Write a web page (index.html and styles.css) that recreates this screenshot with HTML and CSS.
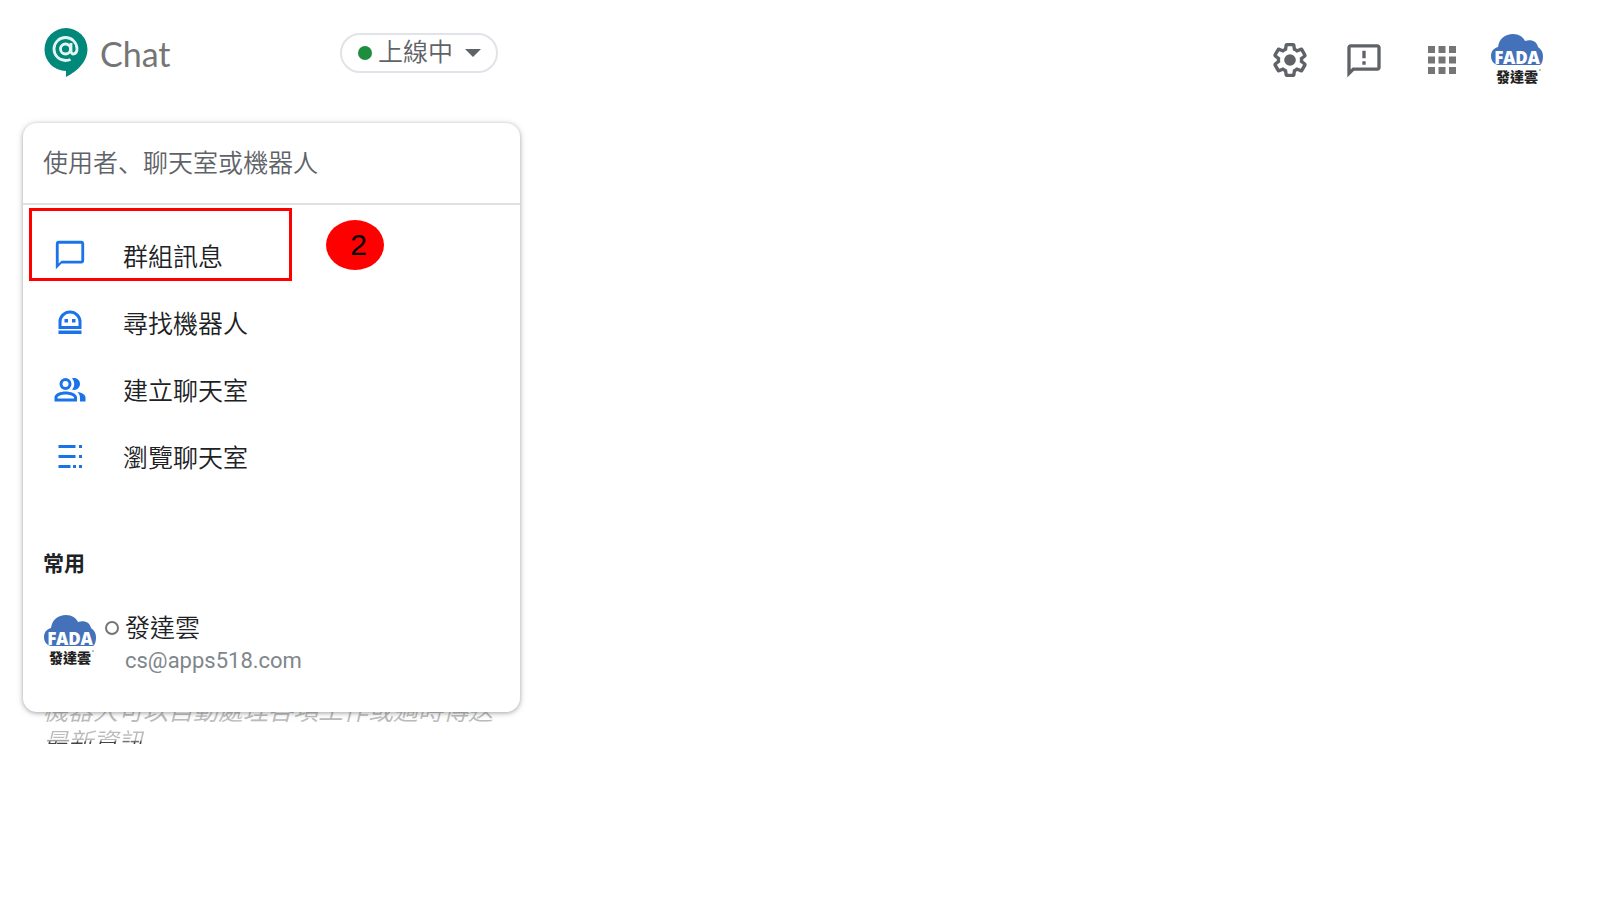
FILE: index.html
```html
<!DOCTYPE html>
<html lang="zh-Hant">
<head>
<meta charset="utf-8">
<title>Chat</title>
<link rel="stylesheet" href="styles.css">
</head>
<body>
<svg class="defs" aria-hidden="true">
  <symbol id="fada" viewBox="0 0 54 54">
    <path fill="#4472ba" d="M8 32C3 31 1 27 1 23c0-5 3-8 7-9C9 6 15 1 23 1c6 0 10 3 12 7 7-2 12 1 13 6 3 2 5 5 5 9 0 4-1 8-3 9z"/>
    <text class="logo-latin" x="27" y="31" text-anchor="middle">FADA</text>
    <text class="logo-han" x="27" y="49" text-anchor="middle">發達雲</text>
    <circle cx="50" cy="37" r="1" fill="#aaa"/>
  </symbol>
</svg>
<header class="topbar">
  <a class="brand" href="#">
    <svg class="brand-mark" viewBox="0 0 44 50" aria-hidden="true">
      <path fill="#00897b" d="M22 0a21.500 21.500 0 0 0 0 43v6c12-6 21.500-16 21.500-27.500A21.500 21.500 0 0 0 22 0z"/>
      <circle cx="21.500" cy="21" r="5" fill="none" stroke="#e5f5f2" stroke-width="2.800"/>
      <path fill="none" stroke="#e5f5f2" stroke-width="2.800" d="M27 15v8c0 4.500 6 4 6-2A11.500 11.500 0 1 0 21.500 32.500c2 0 3.500-.3 5-1"/>
    </svg>
    <span class="brand-name">Chat</span>
  </a>
  <button class="status" type="button"><span class="online"></span><span>上線中</span><span class="caret"></span></button>
  <nav class="tools">
    <button class="tool" type="button" aria-label="設定">
      <svg width="40" height="40" viewBox="0 0 24 24" fill="#5f6368"><path d="M13.850 22.250h-3.700c-.74 0-1.360-.54-1.450-1.270l-.27-1.890c-.27-.14-.53-.29-.79-.46l-1.800.72c-.7.260-1.470-.03-1.810-.65L2.200 15.530c-.35-.66-.2-1.440.36-1.880l1.530-1.190c-.01-.15-.02-.3-.02-.46 0-.15.010-.31.020-.46l-1.520-1.190c-.59-.45-.74-1.260-.37-1.880l1.850-3.190c.34-.62 1.110-.9 1.790-.63l1.810.73c.26-.17.520-.32.780-.46l.27-1.910c.09-.7.710-1.250 1.440-1.250h3.700c.74 0 1.360.54 1.450 1.270l.27 1.890c.27.140.53.290.79.460l1.800-.72c.71-.26 1.480.03 1.820.65l1.840 3.180c.36.660.2 1.440-.36 1.880l-1.520 1.190c.01.150.020.300.020.460s-.01.310-.02.460l1.520 1.190c.56.450.72 1.230.37 1.860l-1.860 3.220c-.34.620-1.110.9-1.800.63l-1.800-.72c-.26.170-.52.320-.78.460l-.27 1.910c-.1.680-.72 1.220-1.460 1.220zm-3.230-2h2.760l.37-2.550.53-.22c.44-.18.880-.44 1.340-.78l.45-.34 2.380.96 1.380-2.400-2.030-1.580.07-.56c.03-.26.060-.51.060-.78s-.03-.53-.06-.78l-.07-.56 2.030-1.580-1.390-2.400-2.390.96-.45-.35c-.42-.32-.87-.58-1.330-.77l-.52-.22-.37-2.550h-2.760l-.37 2.550-.53.210c-.44.190-.88.440-1.340.79l-.45.330-2.380-.95-1.390 2.390 2.030 1.580-.07.560a7 7 0 0 0-.06.790c0 .26.020.53.060.78l.07.560-2.030 1.580 1.380 2.400 2.390-.96.450.35c.43.330.86.580 1.330.77l.53.220z"/><circle cx="12" cy="12" r="3.500"/></svg>
    </button>
    <button class="tool" type="button" aria-label="意見回饋">
      <svg width="40" height="40" viewBox="0 0 24 24" fill="#5f6368"><path d="M20 2.500H4c-1.100 0-1.990.9-1.990 2L2 22.500l4-4h14c1.100 0 2-.9 2-2v-12c0-1.100-.9-2-2-2zm0 14H5.170L4 17.670V4.500h16v12zM11 6.500h2V11h-2zM11 12.800h2v2h-2z"/></svg>
    </button>
    <button class="tool" type="button" aria-label="應用程式">
      <svg width="42" height="42" viewBox="0 0 42 42" fill="#757575"><path d="M7 7h7v7H7zM17.500 7h7v7h-7zM28 7h7v7h-7zM7 17.500h7v7H7zM17.500 17.500h7v7h-7zM28 17.500h7v7h-7zM7 28h7v7H7zM17.500 28h7v7h-7zM28 28h7v7h-7z"/></svg>
    </button>
    <button class="tool account" type="button" aria-label="發達雲"><svg class="avatar"><use href="#fada"/></svg></button>
  </nav>
</header>
<main class="side">
  <section class="card">
    <input class="search" type="text" lang="ja" aria-label="搜尋" placeholder="使用者、聊天室或機器人">
    <ul class="menu">
      <li><button class="item" type="button">
        <svg class="icon" viewBox="0 0 24 24"><path d="M20 2H4c-1.100 0-2 .9-2 2v18l4-4h14c1.100 0 2-.9 2-2V4c0-1.100-.9-2-2-2zm0 14H6l-2 2V4h16v12z"/></svg>群組訊息</button>
        <span class="mark"></span><span class="step">2</span></li>
      <li><button class="item" type="button">
        <svg class="icon" viewBox="0 0 34 34"><path fill-rule="evenodd" d="M5.500 24V17a11.500 11.500 0 0 1 23 0v7zM8.500 21h17v-4a8.500 8.500 0 0 0-17 0zM5.500 25.500h23V29h-23zM11.500 14h3.500v3.500h-3.500zM19 14h3.500v3.500H19z"/></svg>尋找機器人</button></li>
      <li><button class="item" type="button">
        <svg class="icon" viewBox="0 0 34 34"><path transform="translate(0 1)" fill-rule="evenodd" d="M12.500 5a6 6 0 1 1 0 12 6 6 0 0 1 0-12zm0 3a3 3 0 1 0 0 6 3 3 0 0 0 0-6zM1.500 28.500v-4c0-4 6-6 11-6s11.500 2 11.500 6v4zM4.500 25.500H21v-1c0-1.500-4.500-3-8.500-3s-8 1.500-8 3zM19 16.500c3-3 3-8 0-11 4-1.500 8 1.500 8 5.500s-4 7-8 5.500zM24.500 19c4.500.8 8 2.500 8 5.500v4H27v-4c0-2.200-1-4-2.500-5.500z"/></svg>建立聊天室</button></li>
      <li><button class="item" type="button">
        <svg class="icon" viewBox="0 0 34 34"><path d="M5.500 6h17v3h-17zM5.500 16h17v3h-17zM5.500 26h12v3h-12zM26 6h3v3h-3zM26 16h3v3h-3zM26 26h3v3h-3zM20 26h3v3h-3z"/></svg>瀏覽聊天室</button></li>
    </ul>
    <h2 class="heading">常用</h2>
    <a class="contact" href="#">
      <svg class="avatar"><use href="#fada"/></svg>
      <span class="offline"></span>
      <span class="who"><span class="name">發達雲</span><span class="mail">cs@apps518.com</span></span>
    </a>
  </section>
  <p class="tip">機器人可以自動處理各項工作或適時傳送<span class="tip-end">最新資訊</span></p>
</main>
</body>
</html>
```
FILE: styles.css
```css
* { box-sizing: border-box; }
body {
  margin: 0;
  background: #fff;
  color: #202124;
  font-family: Roboto, "Noto Sans CJK TC", sans-serif;
  font-size: 25px;
  font-weight: 350;
}
button, input { font: inherit; color: inherit; background: none; border: 0; padding: 0; }
a { color: inherit; text-decoration: none; }
.defs { position: absolute; width: 0; height: 0; }
.logo-latin { font: 900 17px "Noto Sans", sans-serif; fill: #fff; }
.logo-han { font: 900 14px "Noto Sans CJK TC", sans-serif; fill: #222; }

.topbar { display: flex; align-items: flex-start; padding: 28px 56px 0 44px; height: 123px; }
.brand { display: flex; gap: 12px; width: 296px; }
.brand-mark { width: 44px; height: 50px; }
.brand-name { font: 400 34px/52px Lato, sans-serif; color: #757575; }
.status {
  display: flex; align-items: center; gap: 6px;
  width: 158px; height: 40px; margin-top: 5px; padding: 0 14px 0 16px;
  border: 2px solid #e1e3e8; border-radius: 20px;
  color: #5f6368; line-height: 36px; white-space: nowrap;
}
.online { width: 14px; height: 14px; border-radius: 50%; background: #1e8e3e; }
.caret { margin-left: 6px; border: 8px solid transparent; border-top-color: #5f6368; border-bottom: 0; }
.tools { display: flex; align-items: center; margin-left: auto; margin-top: 5px; }
.tool { display: flex; margin-right: 34px; }
.tool:nth-child(2) { margin-right: 37px; }
.tool:nth-child(3) { margin-right: 27px; }
.tool.account { margin: 0; }
.avatar { width: 54px; height: 54px; flex: none; }

.side { width: 497px; margin-left: 23px; }
.card {
  position: relative; z-index: 1;
  padding-bottom: 35px;
  border-radius: 14px; background: #fff;
  box-shadow: 0 1px 4px rgba(60, 64, 67, .4), 0 1px 8px rgba(60, 64, 67, .12);
}
.search {
  display: block; width: 100%; height: 82px; padding: 0 20px;
  border-bottom: 2px solid #dfe1e5;
  font-family: Roboto, "Noto Sans CJK JP", sans-serif;
}
.search::placeholder { color: #5f6368; opacity: 1; }
.menu { list-style: none; margin: 0; padding: 16px 0 0; }
.menu li { position: relative; }
.item { display: flex; align-items: center; gap: 36px; width: 100%; height: 67px; padding-left: 30px; text-align: left; }
.icon { width: 34px; height: 34px; fill: #1a73e8; }
.mark { position: absolute; left: 6px; top: -13px; width: 263px; height: 73px; border: 3px solid #f00; }
.step {
  position: absolute; left: 303px; top: -1px; width: 58px; height: 50px; padding-left: 7px;
  border-radius: 50%; background: #f00; color: #000;
  font: 400 30px/50px "Liberation Sans", sans-serif; text-align: center;
}
.heading { margin: 60px 20px 0; font-size: 21px; font-weight: 700; line-height: 30px; }
.contact { display: flex; margin: 34px 20px 0; }
.offline { width: 14px; height: 14px; margin: 8px 6px 0 8px; border: 2px solid #757575; border-radius: 50%; }
.contact .avatar { margin-top: 1px; }
.who { display: flex; flex-direction: column; }
.name { line-height: 32px; }
.mail { font-size: 22px; font-weight: 400; line-height: 32px; color: #80868b; }
.tip { margin: -17px 20px 0; color: #bbb; font-style: italic; line-height: 33px; white-space: nowrap; }
.tip-end {
  display: block; height: 16px; overflow: hidden; line-height: 29px;
  background: linear-gradient(#bbb 75%, #444 90%);
  background-clip: text; color: transparent;
}
```
